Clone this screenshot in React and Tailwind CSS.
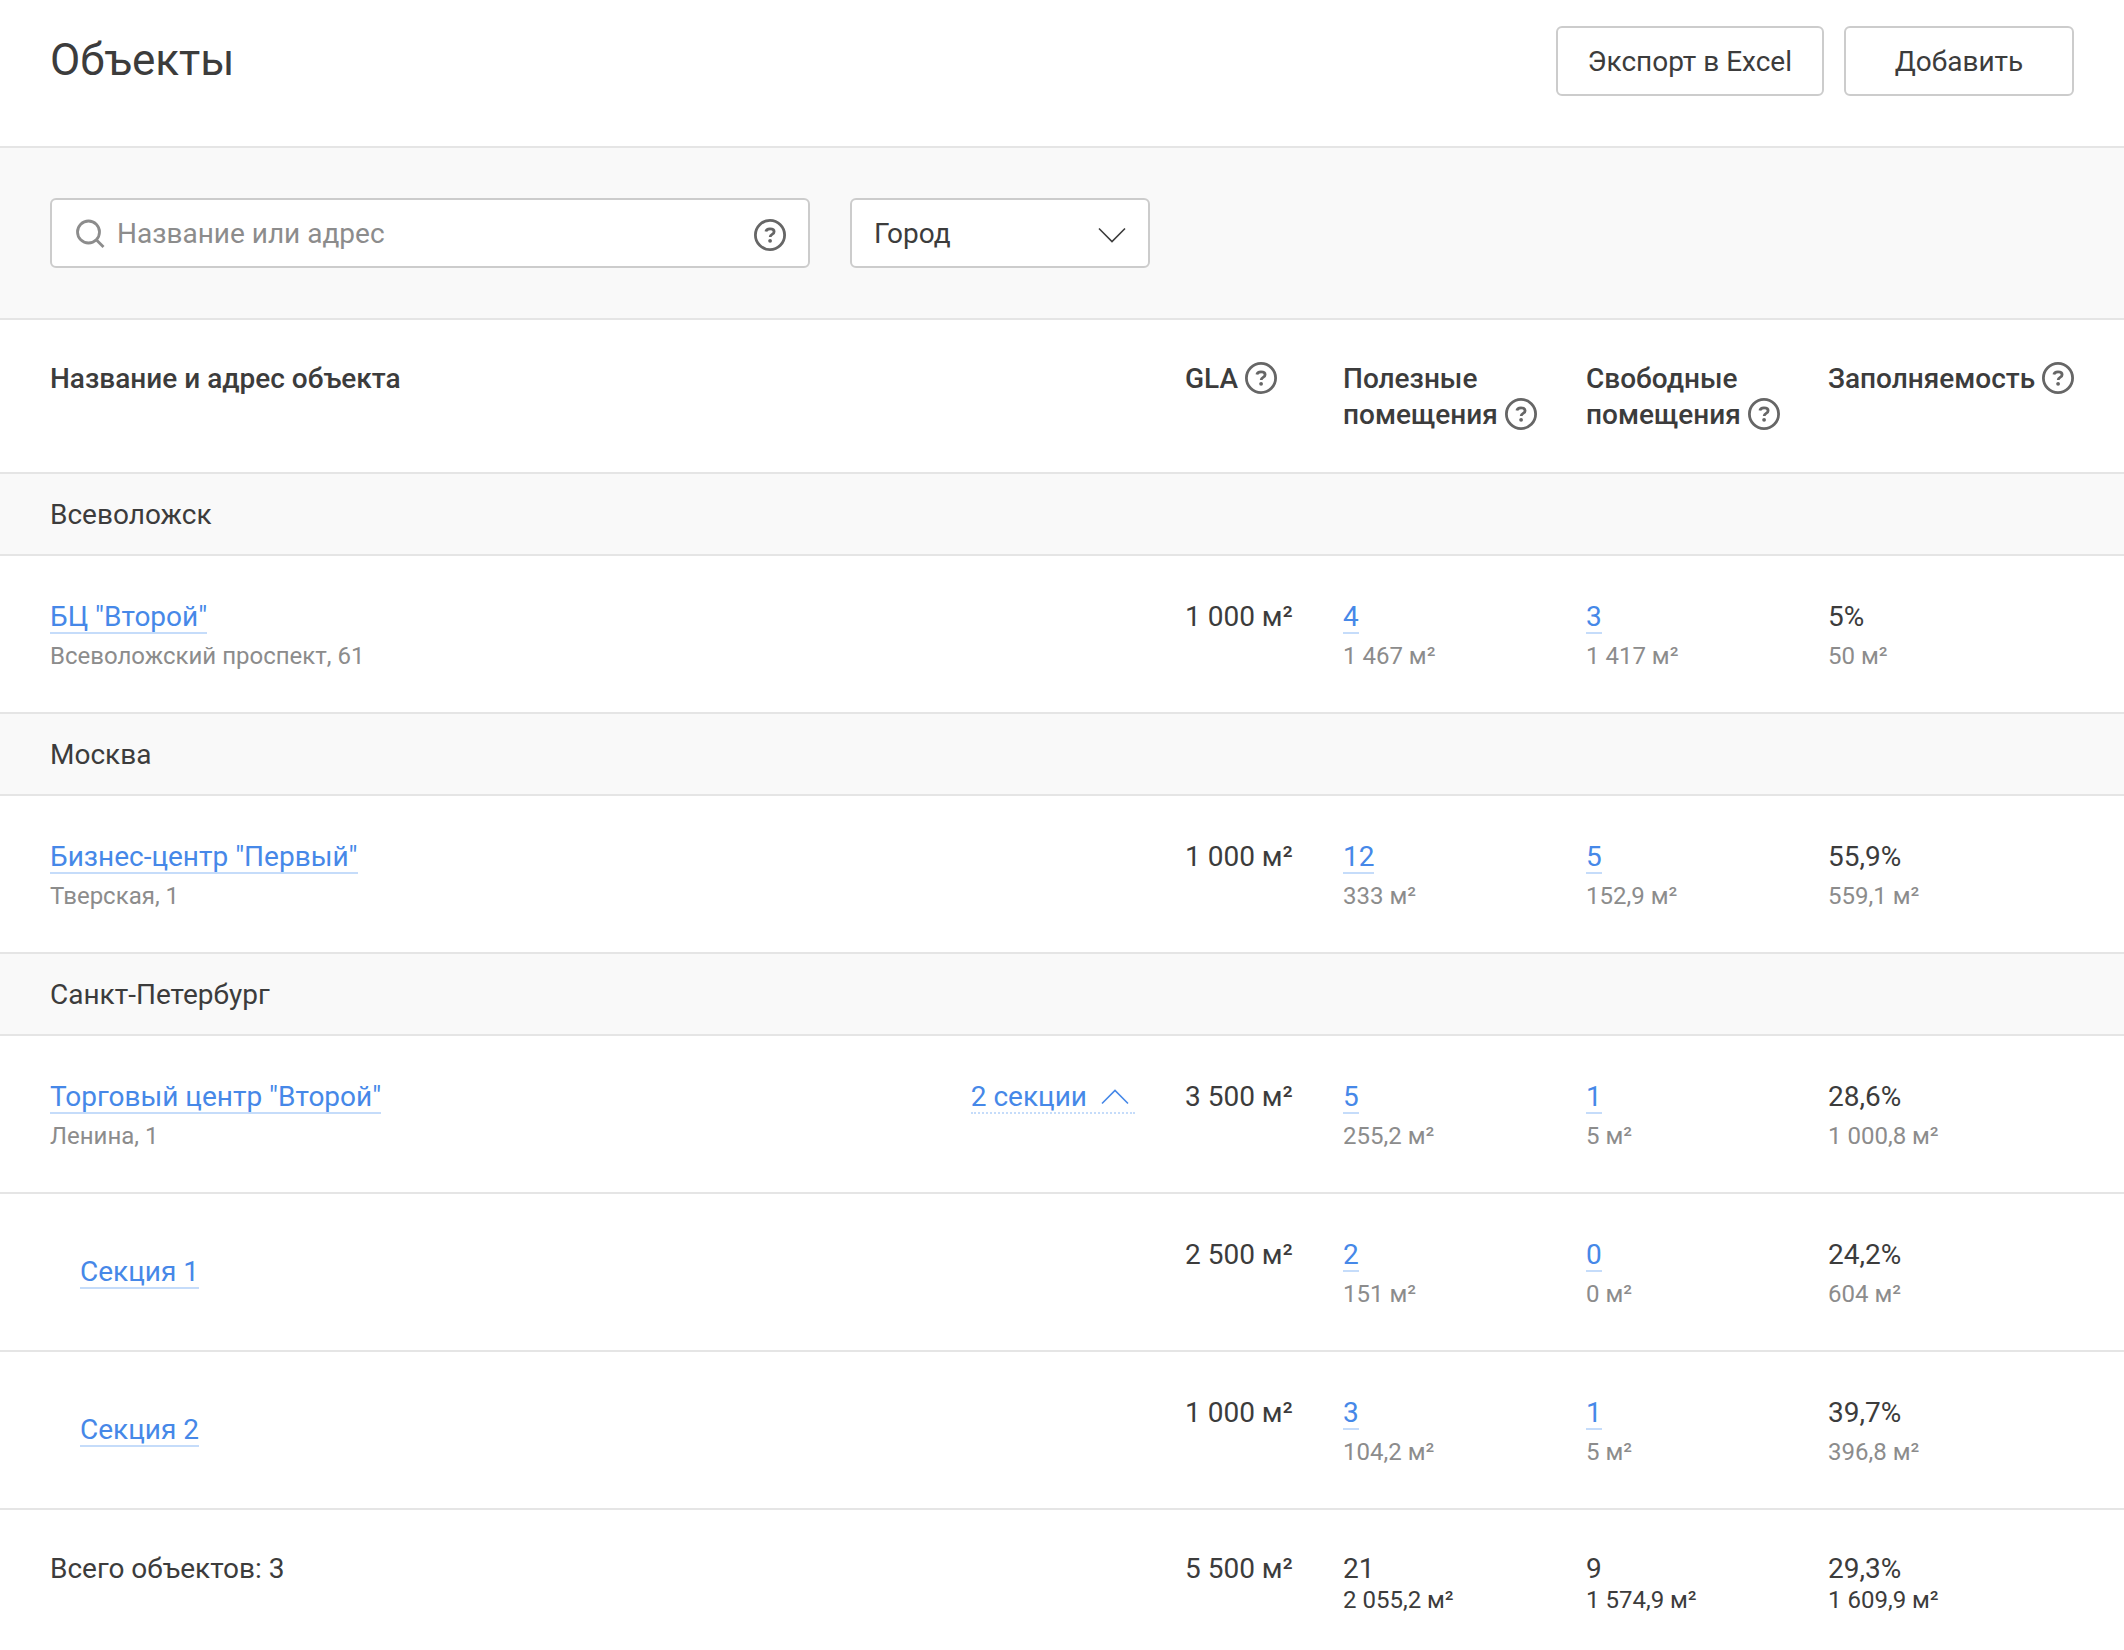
import { useState } from "react";

const groups = [
  {
    city: "Всеволожск",
    rows: [
      { name: 'БЦ "Второй"', address: "Всеволожский проспект, 61", gla: "1 000 м²", useful: ["4", "1 467 м²"], free: ["3", "1 417 м²"], fill: ["5%", "50 м²"] },
    ],
  },
  {
    city: "Москва",
    rows: [
      { name: 'Бизнес-центр "Первый"', address: "Тверская, 1", gla: "1 000 м²", useful: ["12", "333 м²"], free: ["5", "152,9 м²"], fill: ["55,9%", "559,1 м²"] },
    ],
  },
  {
    city: "Санкт-Петербург",
    rows: [
      {
        name: 'Торговый центр "Второй"',
        address: "Ленина, 1",
        gla: "3 500 м²",
        useful: ["5", "255,2 м²"],
        free: ["1", "5 м²"],
        fill: ["28,6%", "1 000,8 м²"],
        toggle: "2 секции",
      },
      { name: "Секция 1", section: true, gla: "2 500 м²", useful: ["2", "151 м²"], free: ["0", "0 м²"], fill: ["24,2%", "604 м²"] },
      { name: "Секция 2", section: true, gla: "1 000 м²", useful: ["3", "104,2 м²"], free: ["1", "5 м²"], fill: ["39,7%", "396,8 м²"] },
    ],
  },
];

function HelpButton({ label }) {
  return (
    <button type="button" aria-label={label} className="mt-0.5 block size-8 shrink-0 cursor-pointer text-[#666]">
      <svg viewBox="0 0 32 32" className="size-8" fill="none" stroke="currentColor">
        <circle cx="16" cy="16" r="14.6" strokeWidth="2.8" />
        <path d="M11.9 12.6c.3-1.800 1.900-2.700 4.100-2.700 2.400 0 4.100 1 4.100 2.800 0 1.300-.8 2-2 2.700-1.300.8-1.900 1.200-1.900 2.500" strokeWidth="2.8" />
        <circle cx="16.100" cy="21.800" r="1.900" fill="currentColor" stroke="none" />
      </svg>
    </button>
  );
}

function TextLink({ children }) {
  return (
    <a href="#" className="inline-block border-b-2 border-[#c5dcfa] leading-[30px] text-[#4688e8]">
      {children}
    </a>
  );
}

function Metric({ value, area, link }) {
  return (
    <td className="pt-10 pb-[38px] align-top">
      <div className="h-10 leading-[42px]">{link ? <TextLink>{value}</TextLink> : value}</div>
      <div className="h-[38px] text-2xl leading-10 text-[#8c8c8c]">{area}</div>
    </td>
  );
}

function ObjectRow({ row, open, onToggle }) {
  return (
    <tr className="border-b-2 border-[#e5e5e5]">
      {row.section ? (
        <td className="pl-20 align-middle">
          <TextLink>{row.name}</TextLink>
        </td>
      ) : (
        <td className="pt-10 pr-[50px] pb-[38px] pl-[50px] align-top">
          <div className="flex h-10 items-start justify-between leading-[42px]">
            <span><TextLink>{row.name}</TextLink></span>
            {row.toggle && (
              <span>
                <button
                  type="button"
                  aria-expanded={open}
                  onClick={onToggle}
                  className="inline-flex cursor-pointer items-center gap-3.5 border-b-2 border-dotted border-[#c5dcfa] leading-[30px] text-[#4688e8]"
                >
                  {row.toggle}
                  <svg viewBox="0 0 34 16" className="h-4 w-[34px]" fill="none" stroke="currentColor" strokeWidth="1.600">
                    <path d={open ? "M1 14.500 14 1.500l13 13" : "M1 1.500 14 14.500l13-13"} />
                  </svg>
                </button>
              </span>
            )}
          </div>
          <div className="h-[38px] text-2xl leading-10 text-[#8c8c8c]">{row.address}</div>
        </td>
      )}
      <td className="pt-10 align-top leading-[42px]">{row.gla}</td>
      <Metric value={row.useful[0]} area={row.useful[1]} link />
      <Metric value={row.free[0]} area={row.free[1]} link />
      <Metric value={row.fill[0]} area={row.fill[1]} />
    </tr>
  );
}

function HeadCell({ lines, help }) {
  const last = lines[lines.length - 1];
  return (
    <th scope="col" className="py-10 text-left align-top leading-[38px] font-medium">
      {lines.slice(0, -1).map((line) => (
        <div key={line} className="h-9">{line}</div>
      ))}
      <div className="flex h-9 items-start gap-[7px]">
        {last}
        <HelpButton label={help} />
      </div>
    </th>
  );
}

function TotalCell({ value, area }) {
  return (
    <td className="pt-10 pb-9 align-top">
      <div className="h-9 leading-[38px]">{value}</div>
      <div className="text-2xl leading-7">{area}</div>
    </td>
  );
}

export default function App() {
  const [open, setOpen] = useState(true);
  return (
    <main className="min-h-screen bg-white font-[Roboto,sans-serif] text-[28px] leading-9 text-[#3c3c3c]">
      <header className="flex items-start justify-between border-b-2 border-[#e5e5e5] px-[50px] pt-[26px] pb-[50px]">
        <h1 className="pt-2 text-[44px] leading-[52px]">Объекты</h1>
        <div className="flex gap-5">
          <button type="button" className="h-[70px] cursor-pointer rounded-md border-2 border-[#ccc] bg-white px-[30px] pt-0.5">
            Экспорт в Excel
          </button>
          <button type="button" className="h-[70px] min-w-[230px] cursor-pointer rounded-md border-2 border-[#ccc] bg-white px-[30px] pt-0.5">
            Добавить
          </button>
        </div>
      </header>

      <form className="flex gap-10 border-b-2 border-[#e5e5e5] bg-[#f9f9f9] px-[50px] py-[50px]" onSubmit={(e) => e.preventDefault()}>
        <div className="flex h-[70px] w-[760px] items-center rounded-md border-2 border-[#ccc] bg-white pt-0.5 pr-[22px] pl-[23px]">
          <svg viewBox="0 0 32 32" className="size-8 shrink-0" fill="none" stroke="#8c8c8c" strokeWidth="2.800">
            <circle cx="13.500" cy="14" r="11" />
            <path d="m21.500 22 7 7" />
          </svg>
          <input
            type="text"
            aria-label="Название или адрес"
            placeholder="Название или адрес"
            className="min-w-0 flex-1 bg-transparent pl-2.5 outline-none placeholder:text-[#8c8c8c]"
          />
          <HelpButton label="Подсказка по поиску" />
        </div>
        <div className="relative w-[300px]">
          <select aria-label="Город" className="h-[70px] w-full cursor-pointer appearance-none rounded-md border-2 border-[#ccc] bg-white px-[22px] pt-0.5 outline-none">
            <option>Город</option>
            {groups.map((g) => (
              <option key={g.city}>{g.city}</option>
            ))}
          </select>
          <svg viewBox="0 0 28 16" className="pointer-events-none absolute top-[29px] right-6 h-4 w-7" fill="none" stroke="#3c3c3c" strokeWidth="1.600">
            <path d="M1 1.500 14 14.500l13-13" />
          </svg>
        </div>
      </form>

      <table className="w-full table-fixed border-collapse">
        <colgroup>
          <col />
          <col className="w-[158px]" />
          <col className="w-[243px]" />
          <col className="w-[242px]" />
          <col className="w-[296px]" />
        </colgroup>
        <thead>
          <tr className="border-b-2 border-[#e5e5e5]">
            <th scope="col" className="py-10 pl-[50px] text-left align-top leading-[38px] font-medium">Название и адрес объекта</th>
            <HeadCell lines={["GLA"]} help="Что такое GLA" />
            <HeadCell lines={["Полезные", "помещения"]} help="О полезных помещениях" />
            <HeadCell lines={["Свободные", "помещения"]} help="О свободных помещениях" />
            <HeadCell lines={["Заполняемость"]} help="О заполняемости" />
          </tr>
        </thead>
        {groups.map((g) => (
          <tbody key={g.city}>
            <tr className="border-b-2 border-[#e5e5e5] bg-[#f9f9f9]">
              <th scope="rowgroup" colSpan={5} className="h-[82px] pt-0.5 pl-[50px] text-left font-normal">{g.city}</th>
            </tr>
            {g.rows
              .filter((row) => open || !row.section)
              .map((row) => (
                <ObjectRow key={row.name} row={row} open={open} onToggle={() => setOpen(!open)} />
              ))}
          </tbody>
        ))}
        <tfoot>
          <tr className="leading-[38px]">
            <td className="pt-10 pl-[50px] align-top">Всего объектов: 3</td>
            <td className="pt-10 align-top">5 500 м²</td>
            <TotalCell value="21" area="2 055,2 м²" />
            <TotalCell value="9" area="1 574,9 м²" />
            <TotalCell value="29,3%" area="1 609,9 м²" />
          </tr>
        </tfoot>
      </table>
    </main>
  );
}
